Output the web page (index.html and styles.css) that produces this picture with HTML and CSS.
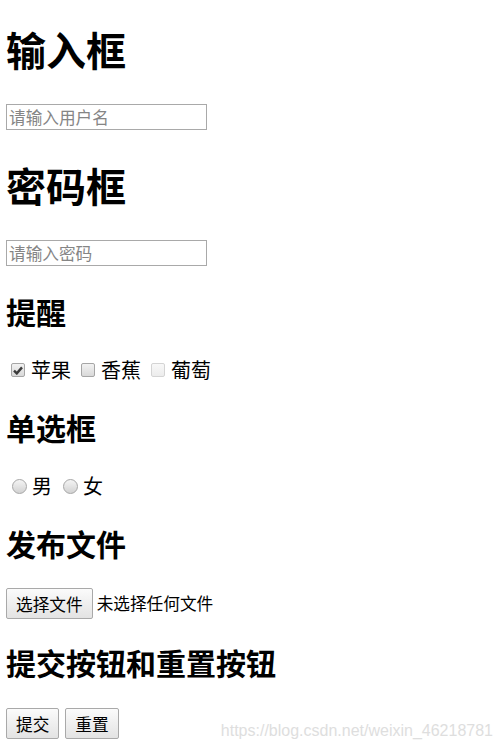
FILE: index.html
```html
<!DOCTYPE html>
<html lang="zh-CN">
  <head>
    <meta charset="UTF-8" />
    <meta name="viewport" content="width=device-width, initial-scale=1.0" />
    <title>表单</title>
    <link rel="stylesheet" href="styles.css">
  </head>
  <body>
    <form>
      <h1>输入框</h1>
      <div class="row row-text">
        <input type="text" class="text-input" placeholder="请输入用户名" />
      </div>

      <h1>密码框</h1>
      <div class="row row-text">
        <input type="password" class="text-input" placeholder="请输入密码" />
      </div>

      <h2>提醒</h2>
      <div class="row row-choice">
        <label class="choice">
          <span class="box checkbox">
            <svg width="10" height="9" viewBox="0 0 10 9"><path d="M1 4.6 L3.8 7.4 L9 1.4" fill="none" stroke="#3c3c3c" stroke-width="2.4" /></svg>
          </span>苹果
        </label>
        <label class="choice">
          <span class="box checkbox"></span>香蕉
        </label>
        <label class="choice">
          <span class="box checkbox disabled"></span>葡萄
        </label>
      </div>

      <h2>单选框</h2>
      <div class="row row-choice">
        <label class="choice radio-choice">
          <span class="box radio"></span>男
        </label>
        <label class="choice radio-choice">
          <span class="box radio"></span>女
        </label>
      </div>

      <h2>发布文件</h2>
      <div class="row row-button">
        <button type="button" class="btn">选择文件</button>
        <span class="file-name">未选择任何文件</span>
      </div>

      <h2>提交按钮和重置按钮</h2>
      <div class="row row-button row-last">
        <button type="submit" class="btn">提交</button>
        <button type="reset" class="btn">重置</button>
      </div>
    </form>

    <div class="watermark">https://blog.csdn.net/weixin_46218781</div>
  </body>
</html>
```

FILE: styles.css
```css
body {
  margin: 0 6px;
  font-family: "Noto Sans CJK SC", "Microsoft YaHei", sans-serif;
  font-size: 20px;
  color: #000;
  background: #fff;
}
h1 {
  font-size: 40px;
  line-height: 48px;
  margin: 25px 0 29px;
}
h2 {
  font-size: 30px;
  line-height: 32px;
  margin: 23px 0 27px;
}

.row {
  display: flex;
  box-sizing: border-box;
  height: 34px;
}
.row-text {
  align-items: flex-start;
  padding-top: 2px;
}
.row-choice {
  align-items: center;
  padding-bottom: 2px;
}
.row-button {
  align-items: flex-start;
  padding-top: 2px;
  height: 37px;
}
.row-last {
  padding-top: 3px;
}

.text-input {
  box-sizing: border-box;
  width: 201px;
  height: 26px;
  margin: 0;
  padding: 0 2px;
  border: 1px solid #a9a9a9;
  font-family: inherit;
  font-size: 16.67px;
  outline: none;
}
.text-input::placeholder {
  color: #858585;
}

.choice {
  display: flex;
  align-items: center;
  line-height: 24px;
  margin-left: 5px;
  margin-right: 5px;
}
.box {
  display: flex;
  align-items: center;
  justify-content: center;
  box-sizing: border-box;
  flex: none;
}
.checkbox {
  width: 14px;
  height: 14px;
  margin-right: 6px;
  border: 1px solid #a6a6a6;
  border-radius: 2px;
  background: linear-gradient(#f2f2f2, #d9d9d9);
}
.checkbox.disabled {
  border-color: #d4d4d4;
  background: linear-gradient(#f8f8f8, #ececec);
}
.radio-choice {
  margin-left: 6px;
  margin-right: 5px;
}
.radio {
  width: 15px;
  height: 15px;
  margin-right: 5px;
  border: 1px solid #a6a6a6;
  border-radius: 50%;
  background: linear-gradient(#f4f4f4, #d2d2d2);
}

.btn {
  box-sizing: border-box;
  height: 31px;
  margin: 0 6px 0 0;
  padding: 0 9px;
  border: 1px solid #a9a9a9;
  border-radius: 2px;
  background: linear-gradient(#fbfbfb, #e3e3e3);
  font-family: inherit;
  font-size: 16.67px;
  color: #000;
}
.file-name {
  margin-left: -2px;
  font-size: 16.67px;
  line-height: 31px;
}

.watermark {
  position: absolute;
  right: 8px;
  top: 722px;
  font-family: "Liberation Sans", Arial, sans-serif;
  font-size: 16px;
  color: #dedede;
}
```
